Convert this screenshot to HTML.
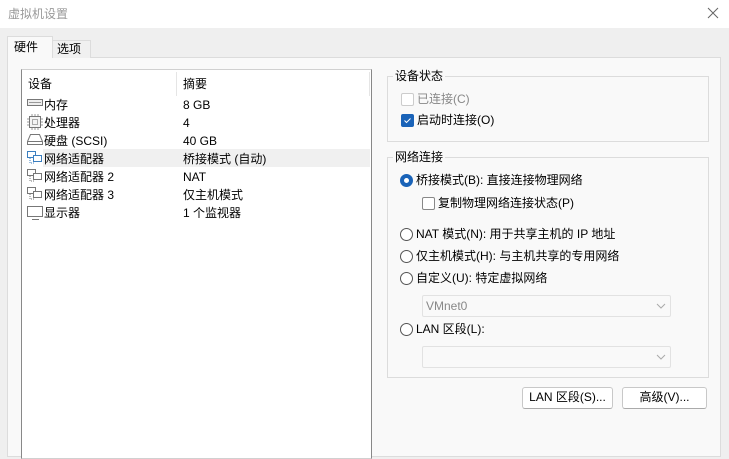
<!DOCTYPE html>
<html><head><meta charset="utf-8"><style>
*{margin:0;padding:0;box-sizing:border-box}
body{width:729px;height:451px;overflow:hidden;background:#efefef;font-family:"Liberation Sans","Noto Sans CJK SC",sans-serif;font-size:12px;color:#000;position:relative}
.a{position:absolute;white-space:nowrap;line-height:16px}
.title{left:0;top:0;width:729px;height:28px;background:#fff}
.panel{left:7px;top:57px;width:714px;height:400px;background:#f9f9f9;border:1px solid #dcdcdc}
.list{left:21px;top:69px;width:351px;height:390px;background:#fff;border:1px solid #d0d0d0;border-left-color:#888;border-right-color:#888}
.grp{border:1px solid #dcdcdc}
.gl{background:#f9f9f9;padding:0 2px}
.cb{width:13px;height:13px;border:1px solid #888;border-radius:2px;background:#fff}
.rd{width:13px;height:13px;border:1px solid #555;border-radius:50%;background:#fff}
.combo{background:#f9f9f9;border:1px solid #e2e2e2;border-radius:2px}
.btn{background:#fff;border:1px solid #c8c8c8;border-bottom-color:#aaa;border-radius:3px;text-align:center;line-height:19px}
</style></head><body>
<div class="a title"></div>
<div class="a" style="left:8px;top:6px;color:#999;font-size:12px">虚拟机设置</div>
<svg class="a" style="left:707px;top:7px" width="12" height="12"><path d="M1 1L11 11M11 1L1 11" stroke="#666" stroke-width="1"/></svg>
<div class="a panel"></div>
<div class="a" style="left:52px;top:40px;width:39px;height:18px;background:#f0f0f0;border:1px solid #dcdcdc;border-bottom:none"></div>
<div class="a" style="left:57px;top:41px">选项</div>
<div class="a" style="left:7px;top:36px;width:46px;height:22px;background:#f9f9f9;border:1px solid #dcdcdc;border-bottom:none"></div>
<div class="a" style="left:14px;top:39px">硬件</div>
<div class="a list"></div>
<div class="a" style="left:176px;top:72px;width:1px;height:24px;background:#e5e5e5"></div>
<div class="a" style="left:369px;top:72px;width:1px;height:24px;background:#e5e5e5"></div>
<div class="a" style="left:28px;top:76px">设备</div>
<div class="a" style="left:183px;top:76px">摘要</div>
<div class="a" style="left:43px;top:149px;width:327px;height:18px;background:#f0f0f0"></div>
<svg class="a" style="left:26px;top:96px" width="18" height="130" fill="none" stroke="#777">
<rect x="1.5" y="3.5" width="15" height="6" fill="#eee"/><path d="M3 6.5h12" stroke="#999"/>
<rect x="3.5" y="20.5" width="11" height="11" fill="#f4f4f4"/><rect x="6.5" y="23.5" width="5" height="5" stroke="#aaa"/><path d="M6 18v2M9 18v2M12 18v2M6 32v2M9 32v2M12 32v2M1 23h2M1 26h2M1 29h2M15 23h2M15 26h2M15 29h2" stroke="#999"/>
<path d="M1.5 48.5v-3l3-7h9l3 7v3z"/><path d="M2 45.5h14"/>
<rect x="1.5" y="55.5" width="8" height="6" stroke="#3b7fc0"/><rect x="7.5" y="59.5" width="8" height="6" stroke="#3b7fc0" fill="#fff"/><path d="M4 62v5h4" stroke="#3b7fc0" stroke-dasharray="1 1"/>
<rect x="1.5" y="73.5" width="8" height="6"/><rect x="7.5" y="77.5" width="8" height="6" fill="#fff"/><path d="M4 80v5h4" stroke-dasharray="1 1"/>
<rect x="1.5" y="91.5" width="8" height="6"/><rect x="7.5" y="95.5" width="8" height="6" fill="#fff"/><path d="M4 98v5h4" stroke-dasharray="1 1"/>
<rect x="1.5" y="110.5" width="15" height="10"/><path d="M6 123.5h7"/>
</svg>
<div class="a" style="left:44px;top:97px">内存</div><div class="a" style="left:183px;top:97px">8 GB</div>
<div class="a" style="left:44px;top:115px">处理器</div><div class="a" style="left:183px;top:115px">4</div>
<div class="a" style="left:44px;top:133px">硬盘 (SCSI)</div><div class="a" style="left:183px;top:133px">40 GB</div>
<div class="a" style="left:44px;top:151px">网络适配器</div><div class="a" style="left:183px;top:151px">桥接模式 (自动)</div>
<div class="a" style="left:44px;top:169px">网络适配器 2</div><div class="a" style="left:183px;top:169px">NAT</div>
<div class="a" style="left:44px;top:187px">网络适配器 3</div><div class="a" style="left:183px;top:187px">仅主机模式</div>
<div class="a" style="left:44px;top:205px">显示器</div><div class="a" style="left:183px;top:205px">1 个监视器</div>

<div class="a grp" style="left:387px;top:76px;width:322px;height:66px"></div>
<div class="a gl" style="left:393px;top:68px">设备状态</div>
<div class="a cb" style="left:401px;top:93px;border-color:#ccc"></div>
<div class="a" style="left:417px;top:91px;color:#888">已连接(C)</div>
<div class="a cb" style="left:401px;top:114px;background:#1a63b8;border-color:#1a63b8"></div>
<svg class="a" style="left:401px;top:114px" width="13" height="13"><path d="M3.5 6.5l2 2 4-4" stroke="#fff" fill="none"/></svg>
<div class="a" style="left:417px;top:112px">启动时连接(O)</div>

<div class="a grp" style="left:387px;top:157px;width:322px;height:221px"></div>
<div class="a gl" style="left:393px;top:149px">网络连接</div>
<div class="a rd" style="left:400px;top:174px;border:4px solid #1a63b8"></div>
<div class="a" style="left:416px;top:172px">桥接模式(B): 直接连接物理网络</div>
<div class="a cb" style="left:422px;top:197px"></div>
<div class="a" style="left:438px;top:195px">复制物理网络连接状态(P)</div>
<div class="a rd" style="left:400px;top:228px"></div>
<div class="a" style="left:416px;top:226px">NAT 模式(N): 用于共享主机的 IP 地址</div>
<div class="a rd" style="left:400px;top:250px"></div>
<div class="a" style="left:416px;top:248px">仅主机模式(H): 与主机共享的专用网络</div>
<div class="a rd" style="left:400px;top:272px"></div>
<div class="a" style="left:416px;top:270px">自定义(U): 特定虚拟网络</div>
<div class="a combo" style="left:422px;top:295px;width:249px;height:22px"></div>
<div class="a" style="left:426px;top:298px;color:#888">VMnet0</div>
<svg class="a" style="left:656px;top:302px" width="10" height="8"><path d="M1 2l4 4 4-4" stroke="#aaa" fill="none"/></svg>
<div class="a rd" style="left:400px;top:323px"></div>
<div class="a" style="left:416px;top:321px">LAN 区段(L):</div>
<div class="a combo" style="left:422px;top:346px;width:249px;height:22px"></div>
<svg class="a" style="left:656px;top:353px" width="10" height="8"><path d="M1 2l4 4 4-4" stroke="#aaa" fill="none"/></svg>

<div class="a btn" style="left:522px;top:387px;width:91px;height:22px">LAN 区段(S)...</div>
<div class="a btn" style="left:622px;top:387px;width:85px;height:22px">高级(V)...</div>
</body></html>
